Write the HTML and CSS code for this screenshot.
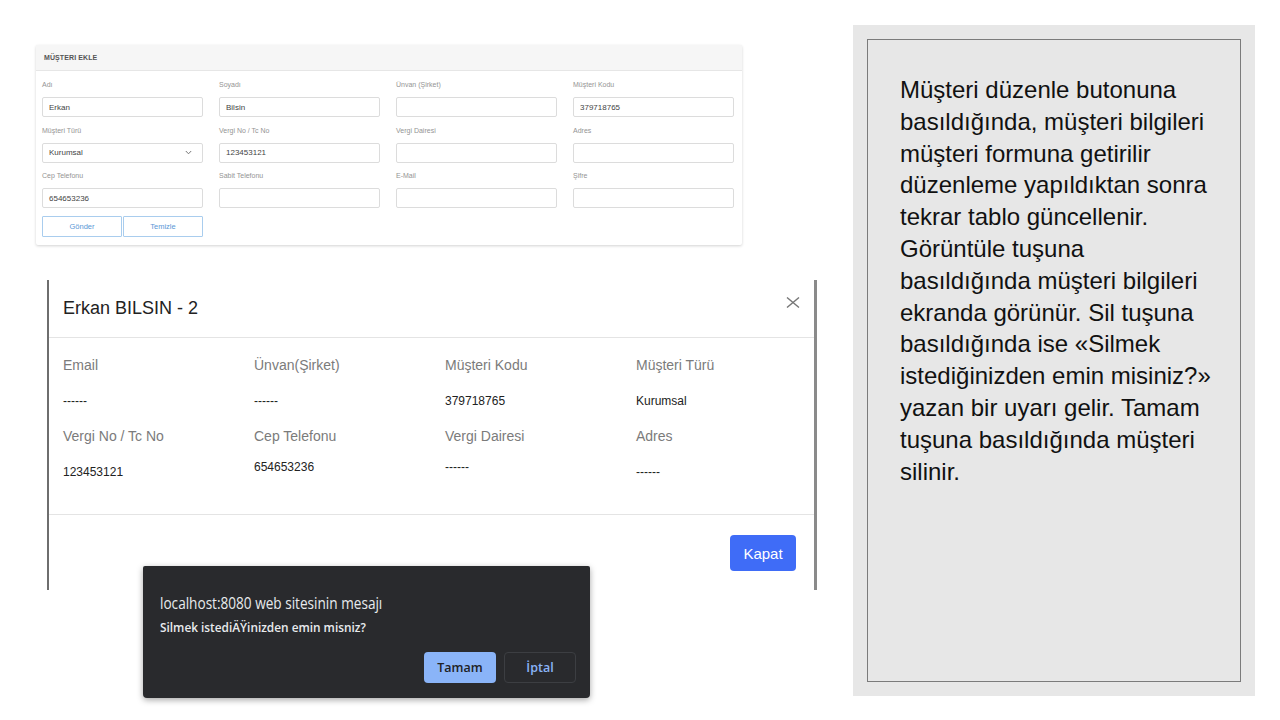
FILE: index.html
```html
<!DOCTYPE html>
<html lang="tr">
<head>
<meta charset="utf-8">
<title>Müşteri</title>
<link rel="stylesheet" href="styles.css">
</head>
<body>
<div class="page">
  <div class="left">
    <section class="card">
      <div class="card-head">MÜŞTERI EKLE</div>
      <div class="card-body">
        <div class="form-grid">
          <div class="field"><div class="lbl">Adı</div><div class="inp">Erkan</div></div>
          <div class="field"><div class="lbl">Soyadı</div><div class="inp">Bilsin</div></div>
          <div class="field"><div class="lbl">Ünvan (Şirket)</div><div class="inp"></div></div>
          <div class="field"><div class="lbl">Müşteri Kodu</div><div class="inp">379718765</div></div>
          <div class="field"><div class="lbl">Müşteri Türü</div><div class="inp sel">Kurumsal<svg class="chev" width="7" height="5" viewBox="0 0 7 5"><polyline points="0.8,1 3.5,3.8 6.2,1" fill="none" stroke="#777" stroke-width="1"/></svg></div></div>
          <div class="field"><div class="lbl">Vergi No / Tc No</div><div class="inp">123453121</div></div>
          <div class="field"><div class="lbl">Vergi Dairesi</div><div class="inp"></div></div>
          <div class="field"><div class="lbl">Adres</div><div class="inp"></div></div>
          <div class="field"><div class="lbl">Cep Telefonu</div><div class="inp">654653236</div></div>
          <div class="field"><div class="lbl">Sabit Telefonu</div><div class="inp"></div></div>
          <div class="field"><div class="lbl">E-Mail</div><div class="inp"></div></div>
          <div class="field"><div class="lbl">Şifre</div><div class="inp"></div></div>
        </div>
        <div class="form-btns">
          <button class="obtn">Gönder</button><button class="obtn">Temizle</button>
        </div>
      </div>
    </section>

    <div class="modal">
      <div class="modal-head">
        <h2 class="modal-title">Erkan BILSIN - 2</h2>
        <svg class="close" width="14" height="11" viewBox="0 0 14 11"><path d="M1 0.5 L13 10.5 M13 0.5 L1 10.5" stroke="#777" stroke-width="1.4" fill="none"/></svg>
      </div>
      <div class="modal-body">
        <div class="info"><div class="info-l">Email</div><div class="info-v">------</div></div>
        <div class="info"><div class="info-l">Ünvan(Şirket)</div><div class="info-v">------</div></div>
        <div class="info"><div class="info-l">Müşteri Kodu</div><div class="info-v">379718765</div></div>
        <div class="info"><div class="info-l">Müşteri Türü</div><div class="info-v">Kurumsal</div></div>
        <div class="info"><div class="info-l">Vergi No / Tc No</div><div class="info-v">123453121</div></div>
        <div class="info"><div class="info-l">Cep Telefonu</div><div class="info-v up">654653236</div></div>
        <div class="info"><div class="info-l">Vergi Dairesi</div><div class="info-v up">------</div></div>
        <div class="info"><div class="info-l">Adres</div><div class="info-v">------</div></div>
      </div>
      <div class="modal-foot"><button class="kapat">Kapat</button></div>
    </div>

    <div class="alert">
      <div class="alert-title"><span>localhost:8080 web sitesinin mesajı</span></div>
      <div class="alert-msg"><span>Silmek istediÄŸinizden emin misniz?</span></div>
      <div class="alert-btns">
        <button class="abtn ok">Tamam</button>
        <button class="abtn cancel">İptal</button>
      </div>
    </div>
  </div>

  <aside class="note">
    <div class="note-box">
      <p class="note-text">Müşteri düzenle butonuna<br>basıldığında, müşteri bilgileri<br>müşteri formuna getirilir<br>düzenleme yapıldıktan sonra<br>tekrar tablo güncellenir.<br>Görüntüle tuşuna<br>basıldığında müşteri bilgileri<br>ekranda görünür. Sil tuşuna<br>basıldığında ise «Silmek<br>istediğinizden emin misiniz?»<br>yazan bir uyarı gelir. Tamam<br>tuşuna basıldığında müşteri<br>silinir.</p>
    </div>
  </aside>
</div>
</body>
</html>
```
FILE: styles.css
```css
* { box-sizing: border-box; }
html, body { margin: 0; padding: 0; background: #fff; }
body { font-family: "Liberation Sans", Arial, sans-serif; color: #222; }

.page { display: flex; width: 1280px; height: 720px; }

.left { position: relative; width: 853px; padding: 45px 0 0 36px; }

/* ---------- form card ---------- */
.card {
  width: 706px; height: 200px; background: #fff;
  box-shadow: 0 1px 3px rgba(0,0,0,0.18);
  border-radius: 2px;
}
.card-head {
  height: 26px; background: #f6f6f6; border-bottom: 1px solid #e6e6e6;
  padding-left: 8px; display: flex; align-items: center;
  font-size: 7px; font-weight: bold; color: #555; letter-spacing: 0.1px;
}
.card-body { padding: 9px 6px 8px; }
.form-grid {
  display: grid; grid-template-columns: repeat(4, 161px);
  column-gap: 16px; row-gap: 8.5px;
}
.lbl { height: 10px; line-height: 10px; font-size: 7px; color: #949494; margin-bottom: 7px; }
.inp {
  height: 20px; border: 1px solid #dcdcdc; border-radius: 2px;
  padding: 0 6px; font-size: 8px; color: #444;
  display: flex; align-items: center; justify-content: space-between;
}
.chev { margin-right: 4px; }
.form-btns { display: flex; gap: 1px; margin-top: 8px; }
.obtn {
  width: 80px; height: 21px; background: #fff;
  border: 1px solid #a9cdee; border-radius: 1px;
  font-family: inherit; font-size: 7.5px; color: #5b98d6; padding: 0;
}

/* ---------- modal ---------- */
.modal {
  width: 770px; height: 310px; margin: 35px 0 0 11px;
  border-left: 2px solid #6e6e6e; border-right: 3px solid #8a8a8a;
  background: #fff; display: flex; flex-direction: column;
}
.modal-head {
  height: 58px; border-bottom: 1px solid #e4e4e4;
  display: flex; justify-content: space-between; align-items: center;
  padding: 0 14px;
}
.modal-title { margin: 0; font-size: 18px; font-weight: normal; color: #222; }
.close { align-self: flex-start; margin-top: 17px; }
.modal-body {
  height: 177px; border-bottom: 1px solid #e4e4e4;
  padding: 19px 0 0 14px;
  display: grid; grid-template-columns: repeat(4, 191px); row-gap: 20px;
  align-content: start;
}
.info { display: flex; flex-direction: column; gap: 21px; }
.info-l { font-size: 14px; line-height: 16px; color: #7b7b7b; }
.info-v { font-size: 12px; line-height: 14px; color: #222; }
.info-v.up { margin-top: -5px; }
.modal-foot { flex: 1; display: flex; justify-content: flex-end; align-items: flex-start; padding: 20px 18px 0 0; }
.kapat {
  width: 66px; height: 36px; border: none; border-radius: 4px;
  background: #3f6cf7; color: #fff; font-family: inherit; font-size: 15px; padding: 0;
}

/* ---------- browser alert ---------- */
.alert {
  position: absolute; left: 143px; top: 566px; width: 447px; height: 132px;
  background: #292a2d; border-radius: 2px 2px 4px 4px;
  box-shadow: 0 2px 6px rgba(0,0,0,0.35);
  padding: 27px 14px 15px 17px;
  display: flex; flex-direction: column;
  font-family: "Open Sans", "Noto Sans", sans-serif;
}
.alert-title { height: 20px; line-height: 20px; font-size: 16px; color: #e8eaed; white-space: nowrap; }
.alert-title span { display: inline-block; transform: scaleX(0.85); transform-origin: left center; }
.alert-msg { margin-top: 6px; height: 16px; line-height: 16px; font-size: 13px; font-weight: 600; color: #e8eaed; white-space: nowrap; }
.alert-msg span { display: inline-block; transform: scaleX(0.91); transform-origin: left center; }
.alert-btns { margin-top: auto; display: flex; justify-content: flex-end; gap: 8px; }
.abtn {
  width: 72px; height: 31px; border-radius: 4px; padding: 0;
  font-family: "Open Sans", "Noto Sans", sans-serif; font-size: 12.5px; font-weight: 600;
}
.abtn.ok { background: #8ab4f8; color: #202124; border: none; }
.abtn.cancel { background: #292a2d; color: #8ab4f8; border: 1px solid #3c3e42; }

/* ---------- note panel ---------- */
.note {
  margin-top: 25px; width: 402px; height: 671px;
  background: #e7e7e7; padding: 14px;
}
.note-box { height: 100%; border: 1px solid #7b7b7b; padding: 34px 0 0 32px; }
.note-text { margin: 0; font-size: 24px; line-height: 31.8px; color: #111; }
```
